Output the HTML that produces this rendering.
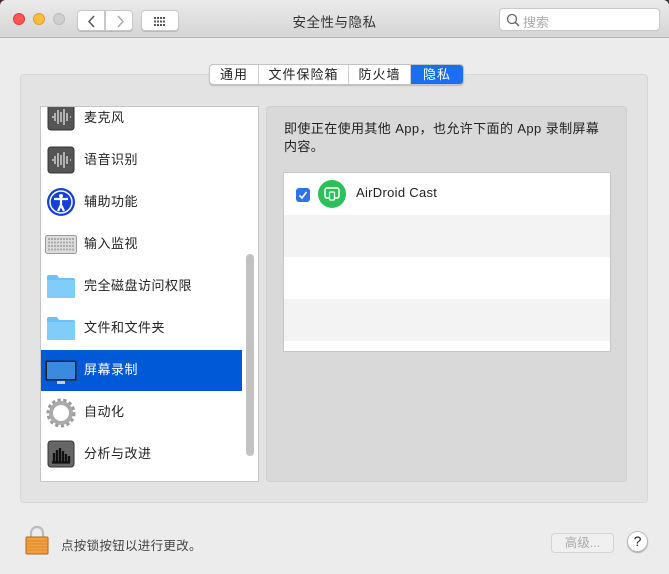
<!DOCTYPE html>
<html><head><meta charset="utf-8"><style>
*{margin:0;padding:0;box-sizing:border-box}
body{width:669px;height:574px;overflow:hidden;background:#3a3030;font-family:"Liberation Sans","Noto Sans CJK SC",sans-serif;font-size:13px;color:#222}
.win{position:absolute;left:0;top:0;width:669px;height:574px;background:#ececec;border-radius:6px 6px 0 0;overflow:hidden}
.tb{position:absolute;left:0;top:0;width:669px;height:38px;background:linear-gradient(#ebebeb,#d5d5d5);border-bottom:1px solid #b8b8b8}
.dot{position:absolute;top:13px;width:12px;height:12px;border-radius:50%}
.btn{position:absolute;background:#fff;border:1px solid #c8c8c8;border-radius:4px;box-shadow:0 1px 0 #bbb}
.abs{position:absolute}
.panel{position:absolute;left:20px;top:74px;width:628px;height:429px;background:#e3e3e3;border:1px solid #d6d6d6;border-radius:4px}
.tabs{position:absolute;left:209px;top:64px;height:21px;display:flex;background:#fff;border:1px solid #c3c3c3;border-radius:4px;box-shadow:0 1px 1px #bbb;overflow:hidden;font-size:13px;letter-spacing:1px}
.tabs div{padding:0 0;line-height:19px;text-align:center;border-right:1px solid #d0d0d0}
.list{position:absolute;left:40px;top:106px;width:219px;height:376px;background:#fff;border:1px solid #c5c5c5;overflow:hidden}
.row{position:absolute;left:0;width:202px;height:41px}
.row span{position:absolute;left:43px;top:9px;font-size:13px;letter-spacing:0.5px}
.right{position:absolute;left:266px;top:106px;width:361px;height:376px;background:#d9d9d9;border:1px solid #d0d0d0;border-radius:4px}
</style></head><body><div class="win">
<div class="tb">
<div class="dot" style="left:13px;background:#fc5753;border:1px solid #df3e3a"></div>
<div class="dot" style="left:33px;background:#fdbc40;border:1px solid #dea123"></div>
<div class="dot" style="left:53px;background:#cfcfcf;border:1px solid #bbb"></div>
<div class="btn" style="left:77px;top:10px;width:28px;height:21px;border-radius:4px 0 0 4px"><svg width="28" height="21"><path d="M16 5 L11 10.5 L16 16" stroke="#555" stroke-width="1.5" fill="none"/></svg></div>
<div class="btn" style="left:105px;top:10px;width:28px;height:21px;border-radius:0 4px 4px 0"><svg width="28" height="21"><path d="M12 5 L17 10.5 L12 16" stroke="#aaa" stroke-width="1.5" fill="none"/></svg></div>
<div class="btn" style="left:141px;top:10px;width:38px;height:21px"><svg width="38" height="21"><g fill="#555"><rect x="12" y="6" width="2" height="2"/><rect x="15" y="6" width="2" height="2"/><rect x="18" y="6" width="2" height="2"/><rect x="21" y="6" width="2" height="2"/><rect x="12" y="9.5" width="2" height="2"/><rect x="15" y="9.5" width="2" height="2"/><rect x="18" y="9.5" width="2" height="2"/><rect x="21" y="9.5" width="2" height="2"/><rect x="12" y="13" width="2" height="2"/><rect x="15" y="13" width="2" height="2"/><rect x="18" y="13" width="2" height="2"/><rect x="21" y="13" width="2" height="2"/></g></svg></div>
<div class="abs" style="left:0;width:669px;top:11px;text-align:center;font-size:13.5px;color:#333;letter-spacing:0.5px">安全性与隐私</div>
<div class="btn" style="left:499px;top:8px;width:161px;height:23px;box-shadow:none"><svg class="abs" style="left:6px;top:4px" width="14" height="14"><circle cx="6" cy="6" r="4.5" stroke="#666" stroke-width="1.3" fill="none"/><path d="M9.3 9.3 L13 13" stroke="#666" stroke-width="1.5"/></svg><span class="abs" style="left:23px;top:3px;color:#aaa;font-size:13px">搜索</span></div>
</div>
<div class="panel"></div>
<div class="tabs"><div style="width:49px">通用</div><div style="width:90px">文件保险箱</div><div style="width:62px">防火墙</div><div style="width:52px;background:#1a6ff0;color:#fff;border:0">隐私</div></div>
<div class="list">
<div class="row" style="top:-9px"><svg class="abs" style="left:6px;top:5px" width="28" height="28"><rect x="1" y="1" width="26" height="26" rx="3" fill="#555" stroke="#333"/><path d="M5 14h2M8 10v8M11 7v14M14 9v10M17 6v16M20 10v8M23 14h1" stroke="#eee" stroke-width="1.2"/></svg><span>麦克风</span></div>
<div class="row" style="top:33px"><svg class="abs" style="left:6px;top:6px" width="28" height="28"><rect x="1" y="1" width="26" height="26" rx="3" fill="#555" stroke="#333"/><path d="M5 14h2M8 10v8M11 7v14M14 9v10M17 6v16M20 10v8M23 14h1" stroke="#eee" stroke-width="1.2"/></svg><span>语音识别</span></div>
<div class="row" style="top:75px"><svg class="abs" style="left:5px;top:5px" width="30" height="30"><circle cx="15" cy="15" r="14" fill="#1440d8"/><circle cx="15" cy="15" r="11" fill="none" stroke="#fff" stroke-width="1.5"/><circle cx="15" cy="9" r="2" fill="#fff"/><path d="M8 12h14M15 12v6M15 18l-3 6M15 18l3 6" stroke="#fff" stroke-width="2.2"/></svg><span>辅助功能</span></div>
<div class="row" style="top:117px"><svg class="abs" style="left:4px;top:11px" width="32" height="20"><rect x="0.5" y="0.5" width="31" height="18" rx="2" fill="#ddd" stroke="#999"/><path d="M3 4h26M3 7.5h26M3 11h26M3 14.5h26" stroke="#aaa" stroke-width="2" stroke-dasharray="2 1"/></svg><span>输入监视</span></div>
<div class="row" style="top:159px"><svg class="abs" style="left:5px;top:8px" width="30" height="25"><path d="M1 3q0-2 2-2h8l2 3h14q2 0 2 2v17q0 1-1 1H2q-1 0-1-1z" fill="#6cc0f3"/><rect x="1" y="6" width="28" height="18" rx="1" fill="#7fcdf8"/></svg><span>完全磁盘访问权限</span></div>
<div class="row" style="top:201px"><svg class="abs" style="left:5px;top:8px" width="30" height="25"><path d="M1 3q0-2 2-2h8l2 3h14q2 0 2 2v17q0 1-1 1H2q-1 0-1-1z" fill="#6cc0f3"/><rect x="1" y="6" width="28" height="18" rx="1" fill="#7fcdf8"/></svg><span>文件和文件夹</span></div>
<div class="row" style="top:243px;background:#0059d6;color:#fff;width:201px"><svg class="abs" style="left:4px;top:10px" width="32" height="26"><rect x="0.5" y="0.5" width="31" height="20" rx="1" fill="#222"/><rect x="2" y="2" width="28" height="17" fill="#3a8ae0"/><rect x="12" y="21" width="8" height="3" fill="#ccc"/></svg><span style="color:#fff">屏幕录制</span></div>
<div class="row" style="top:285px"><svg class="abs" style="left:4px;top:5px" width="32" height="32"><circle cx="16" cy="16" r="12" fill="none" stroke="#999" stroke-width="5" stroke-dasharray="3 2.3"/><circle cx="16" cy="16" r="10" fill="none" stroke="#aaa" stroke-width="4"/><circle cx="16" cy="16" r="7" fill="#fff"/></svg><span>自动化</span></div>
<div class="row" style="top:327px"><svg class="abs" style="left:6px;top:6px" width="28" height="28"><rect x="1" y="1" width="26" height="26" rx="3" fill="#666" stroke="#333"/><path d="M7 22V13M10 22V10M13 22V8M16 22V11M19 22V14M22 22V16M5 22.5h18" stroke="#111" stroke-width="2.3"/></svg><span>分析与改进</span></div>
<div class="abs" style="left:205px;top:147px;width:8px;height:202px;background:#c2c2c2;border-radius:4px"></div>
</div>
<div class="right">
<div class="abs" style="left:17px;top:13px;width:318px;line-height:18px;font-size:13px;letter-spacing:0.4px;color:#222">即使正在使用其他 App，也允许下面的 App 录制屏幕内容。</div>
<div class="abs" style="left:16px;top:65px;width:328px;height:180px;background:#fff;border:1px solid #c6c6c6">
<div class="abs" style="left:0;top:42px;width:326px;height:42px;background:#f3f3f3"></div>
<div class="abs" style="left:0;top:126px;width:326px;height:42px;background:#f3f3f3"></div>
<div class="abs" style="left:12px;top:15px;width:14px;height:14px;background:#2d74ea;border-radius:3px"><svg width="14" height="14"><path d="M3.5 7.5l2.5 2.5 4.5-6" stroke="#fff" stroke-width="1.6" fill="none"/></svg></div>
<svg class="abs" style="left:34px;top:7px" width="28" height="28"><circle cx="14" cy="14" r="14" fill="#2bc05a"/><rect x="7" y="8" width="14" height="10" rx="2" fill="none" stroke="#fff" stroke-width="1.5"/><rect x="11.5" y="12" width="5" height="8" rx="1" fill="#2bc05a" stroke="#fff" stroke-width="1.3"/></svg>
<div class="abs" style="left:72px;top:12px;font-size:13px;letter-spacing:0.3px;color:#222">AirDroid Cast</div>
</div>
</div>
<svg class="abs" style="left:25px;top:525px" width="24" height="30"><path d="M6 13V8a6 6 0 0 1 12 0v5" fill="none" stroke="#bbb" stroke-width="2.2"/><rect x="1" y="12" width="22" height="17" rx="1" fill="#f0a040" stroke="#b06a10"/><path d="M2 16h20M2 19h20M2 22h20M2 25h20" stroke="#d98020" stroke-width="0.8"/></svg>
<div class="abs" style="left:61px;top:535px;font-size:12.5px;color:#444;letter-spacing:0.3px">点按锁按钮以进行更改。</div>
<div class="abs" style="left:551px;top:533px;width:63px;height:20px;border:1px solid #d4d4d4;border-radius:4px;background:#f0f0f0;color:#aaa;text-align:center;line-height:18px;font-size:12.5px">高级...</div>
<div class="abs" style="left:627px;top:531px;width:21px;height:21px;border-radius:50%;background:#fff;border:1px solid #bbb;box-shadow:0 1px 1px #aaa;text-align:center;line-height:19px;font-size:14px;color:#222">?</div>
</div></body></html>
